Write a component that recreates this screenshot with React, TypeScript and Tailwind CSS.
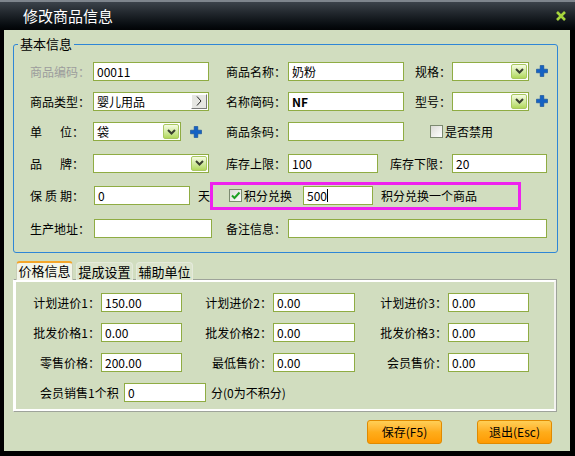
import React from "react"

const inputBase =
  "h-[19px] border border-[#8fac43] bg-white text-[12px] leading-[17px] px-[3px] text-black flex items-center overflow-hidden whitespace-nowrap"

function Label({ text, w, className = "" }: { text: string; w: number | string; className?: string }) {
  return (
    <div className={`shrink-0 text-[12px] leading-[17px] whitespace-nowrap ${className}`} style={{ width: w }}>
      {text}
    </div>
  )
}

function Spaced({ chars, w }: { chars: string[]; w: number }) {
  return (
    <div className="shrink-0 flex text-[12px] leading-[17px]" style={{ width: w }}>
      <div className="flex justify-between w-[54px]">
        {chars.map((c, i) => (
          <span key={i}>{c}</span>
        ))}
      </div>
    </div>
  )
}

function Field({ w, value = "", className = "" }: { w: number; value?: React.ReactNode; className?: string }) {
  return (
    <div className={`${inputBase} shrink-0 ${className}`} style={{ width: w }}>
      {value}
    </div>
  )
}

function Chevron() {
  return (
    <svg width="9" height="6" viewBox="0 0 9 6">
      <path d="M1 1l3.5 3.5L8 1" fill="none" stroke="#3a3f30" strokeWidth="2" />
    </svg>
  )
}

function Select({ w, value = "" }: { w: number; value?: string }) {
  return (
    <div className={`${inputBase} shrink-0 justify-between pr-[1px]`} style={{ width: w }}>
      <span>{value}</span>
      <div className="w-[16px] h-[15px] rounded-[2px] border border-[#a9c862] bg-gradient-to-b from-[#f6fce2] to-[#b2d85a] flex items-center justify-center">
        <Chevron />
      </div>
    </div>
  )
}

function Plus() {
  return (
    <svg width="12" height="12" viewBox="0 0 12 12" className="shrink-0">
      <path d="M4.2 0.5h3.6v3.7h3.7v3.6H7.8v3.7H4.2V7.8H0.5V4.2h3.7z" fill="#1462c4" stroke="#0d4a96" strokeWidth="0.6" />
    </svg>
  )
}

function Check({ checked = false }: { checked?: boolean }) {
  return (
    <div className="shrink-0 w-[13px] h-[13px] border border-[#7c8a70] bg-gradient-to-br from-[#dcdcd6] to-white flex items-center justify-center">
      {checked && (
        <svg width="11" height="11" viewBox="0 0 11 11">
          <path d="M2 5.5l2.5 2.5L9.5 2.5" fill="none" stroke="#1fa024" strokeWidth="2" />
        </svg>
      )}
    </div>
  )
}

function Row({ h, children }: { h: number; children: React.ReactNode }) {
  return (
    <div className="flex items-center pl-[16px]" style={{ height: h }}>
      {children}
    </div>
  )
}

function PriceRow({ cells }: { cells: [string, string, number, number][] }) {
  return (
    <div className="flex items-center h-[30px]">
      {cells.map(([label, value, lw, iw], i) => (
        <React.Fragment key={i}>
          <div className="shrink-0 text-right text-[12px] leading-[17px] pr-[1px]" style={{ width: lw }}>
            {label}
          </div>
          <Field w={iw} value={value} />
        </React.Fragment>
      ))}
    </div>
  )
}

function OrangeButton({ text }: { text: string }) {
  return (
    <button className="w-[75px] h-[24px] rounded-[3px] border border-[#e08a00] bg-gradient-to-b from-[#ffcf55] via-[#ffad1a] to-[#ff9a00] text-[12px] text-black">
      {text}
    </button>
  )
}

export default function App() {
  return (
    <div className="w-[575px] h-[456px] bg-black flex flex-col font-['Noto_Sans_CJK_SC',sans-serif] text-black">
      {/* title bar */}
      <div className="h-[30px] shrink-0 border-t-2 border-[#7e858d] bg-gradient-to-b from-[#3c434b] to-[#020406] flex items-center justify-between pl-[23px] pr-[9px]">
        <span className="text-white text-[15px] leading-[18px]">修改商品信息</span>
        <svg width="10" height="10" viewBox="0 0 10 10">
          <path d="M1 1L9 9M9 1L1 9" stroke="#a6d53c" strokeWidth="2.6" />
        </svg>
      </div>

      <div className="flex-1 ml-[4px] mr-[5px] mb-[5px] bg-[#d1ddbf] flex flex-col">
        <fieldset className="mt-[6px] ml-[9px] w-[545px] border border-[#2f86d6] rounded-[3px] pb-[7px]">
          <legend className="ml-[4px] px-[2px] text-[13px] leading-[16px]">基本信息</legend>
          <div className="mt-[4px]">
            <Row h={30}>
              <Label text="商品编码：" w={63} className="text-[#9c9c9c]" />
              <Field w={116} value="00011" className="bg-[#ffffe8] text-[#7c7c7c]" />
              <Label text="商品名称：" w={62} className="ml-[17px]" />
              <Field w={116} value="奶粉" />
              <Label text="规格：" w={37} className="ml-[11px]" />
              <Select w={77} />
              <div className="ml-[7px]">
                <Plus />
              </div>
            </Row>
            <Row h={30}>
              <Label text="商品类型：" w={63} />
              <div className={`${inputBase} w-[116px] shrink-0 justify-between pr-[1px]`}>
                <span>婴儿用品</span>
                <div className="w-[16px] h-[15px] bg-[#e6e6e2] border border-t-white border-l-white border-r-[#7a7a7a] border-b-[#7a7a7a] flex items-center justify-center">
                  <svg width="8" height="12" viewBox="0 0 8 12">
                    <path d="M2 1.5l4 4.5-4 4.5" fill="none" stroke="#222" strokeWidth="1" />
                  </svg>
                </div>
              </div>
              <Label text="名称简码：" w={62} className="ml-[17px]" />
              <Field w={116} value={<span className="font-bold">NF</span>} />
              <Label text="型号：" w={37} className="ml-[11px]" />
              <Select w={77} />
              <div className="ml-[7px]">
                <Plus />
              </div>
            </Row>
            <Row h={31}>
              <Spaced chars={["单", "位："]} w={63} />
              <Select w={88} value="袋" />
              <div className="ml-[9px]">
                <Plus />
              </div>
              <Label text="商品条码：" w={62} className="ml-[24px]" />
              <Field w={116} />
              <div className="ml-[26px]">
                <Check />
              </div>
              <span className="ml-[2px] text-[12px] leading-[17px]">是否禁用</span>
            </Row>
            <Row h={32}>
              <Spaced chars={["品", "牌："]} w={63} />
              <Select w={116} />
              <Label text="库存上限：" w={62} className="ml-[17px]" />
              <Field w={90} value="100" />
              <Label text="库存下限：" w={62} className="ml-[12px]" />
              <Field w={95} value="20" />
            </Row>
            <Row h={33}>
              <Spaced chars={["保", "质", "期："]} w={64} />
              <Field w={96} value="0" />
              <span className="ml-[8px] text-[12px] leading-[17px]">天</span>
              <div className="ml-[0px] w-[311px] h-[28px] border-[3px] border-[#ee22ee] flex items-center pl-[16px]">
                <Check checked />
                <span className="ml-[2px] text-[12px] leading-[17px]">积分兑换</span>
                <Field
                  w={70}
                  value={
                    <>
                      500<span className="inline-block w-px h-[13px] bg-black" />
                    </>
                  }
                  className="ml-[11px] bg-[#ffffe8]"
                />
                <span className="ml-[8px] text-[12px] leading-[17px]">积分兑换一个商品</span>
              </div>
            </Row>
            <Row h={33}>
              <Label text="生产地址：" w={64} />
              <Field w={118} />
              <Label text="备注信息：" w={62} className="ml-[14px]" />
              <Field w={259} />
            </Row>
          </div>
        </fieldset>

        {/* tabs */}
        <div className="mt-[8px] ml-[12px] flex gap-[3px] -mb-px relative z-10 h-[19px] items-end">
          <div className="w-[57px] h-[19px] rounded-t-[4px] border border-b-0 border-[#c9cfb8] border-t-2 border-t-[#f4a62a] bg-[#f2f4e8] text-[13px] leading-[16px] text-center">
            价格信息
          </div>
          <div className="w-[57px] h-[18px] rounded-t-[4px] border border-b-0 border-[#e4eadb] bg-[#dbe4cc] text-[13px] leading-[17px] text-center">
            提成设置
          </div>
          <div className="w-[57px] h-[18px] rounded-t-[4px] border border-b-0 border-[#e4eadb] bg-[#dbe4cc] text-[13px] leading-[17px] text-center">
            辅助单位
          </div>
        </div>

        {/* tab panel */}
        <div className="ml-[9px] w-[544px] h-[133px] border border-[#9ea39a] border-l-white shrink-0">
          <div className="h-full border-2 border-white border-r-[#f2f2ee] pt-[5px]">
            <PriceRow
              cells={[
                ["计划进价1：", "150.00", 85, 81],
                ["计划进价2：", "0.00", 91, 82],
                ["计划进价3：", "0.00", 93, 81],
              ]}
            />
            <PriceRow
              cells={[
                ["批发价格1：", "0.00", 85, 81],
                ["批发价格2：", "0.00", 91, 82],
                ["批发价格3：", "0.00", 93, 81],
              ]}
            />
            <PriceRow
              cells={[
                ["零售价格：", "200.00", 85, 81],
                ["最低售价：", "0.00", 91, 82],
                ["会员售价：", "0.00", 93, 81],
              ]}
            />
            <div className="flex items-center h-[30px] pl-[24px]">
              <span className="text-[12px] leading-[17px] w-[84px]">会员销售1个积</span>
              <Field w={82} value="0" />
              <span className="ml-[5px] text-[12px] leading-[17px]">分(0为不积分)</span>
            </div>
          </div>
        </div>

        {/* buttons */}
        <div className="mt-[8px] flex justify-end gap-[35px] pr-[18px]">
          <OrangeButton text="保存(F5)" />
          <OrangeButton text="退出(Esc)" />
        </div>
      </div>
    </div>
  )
}
